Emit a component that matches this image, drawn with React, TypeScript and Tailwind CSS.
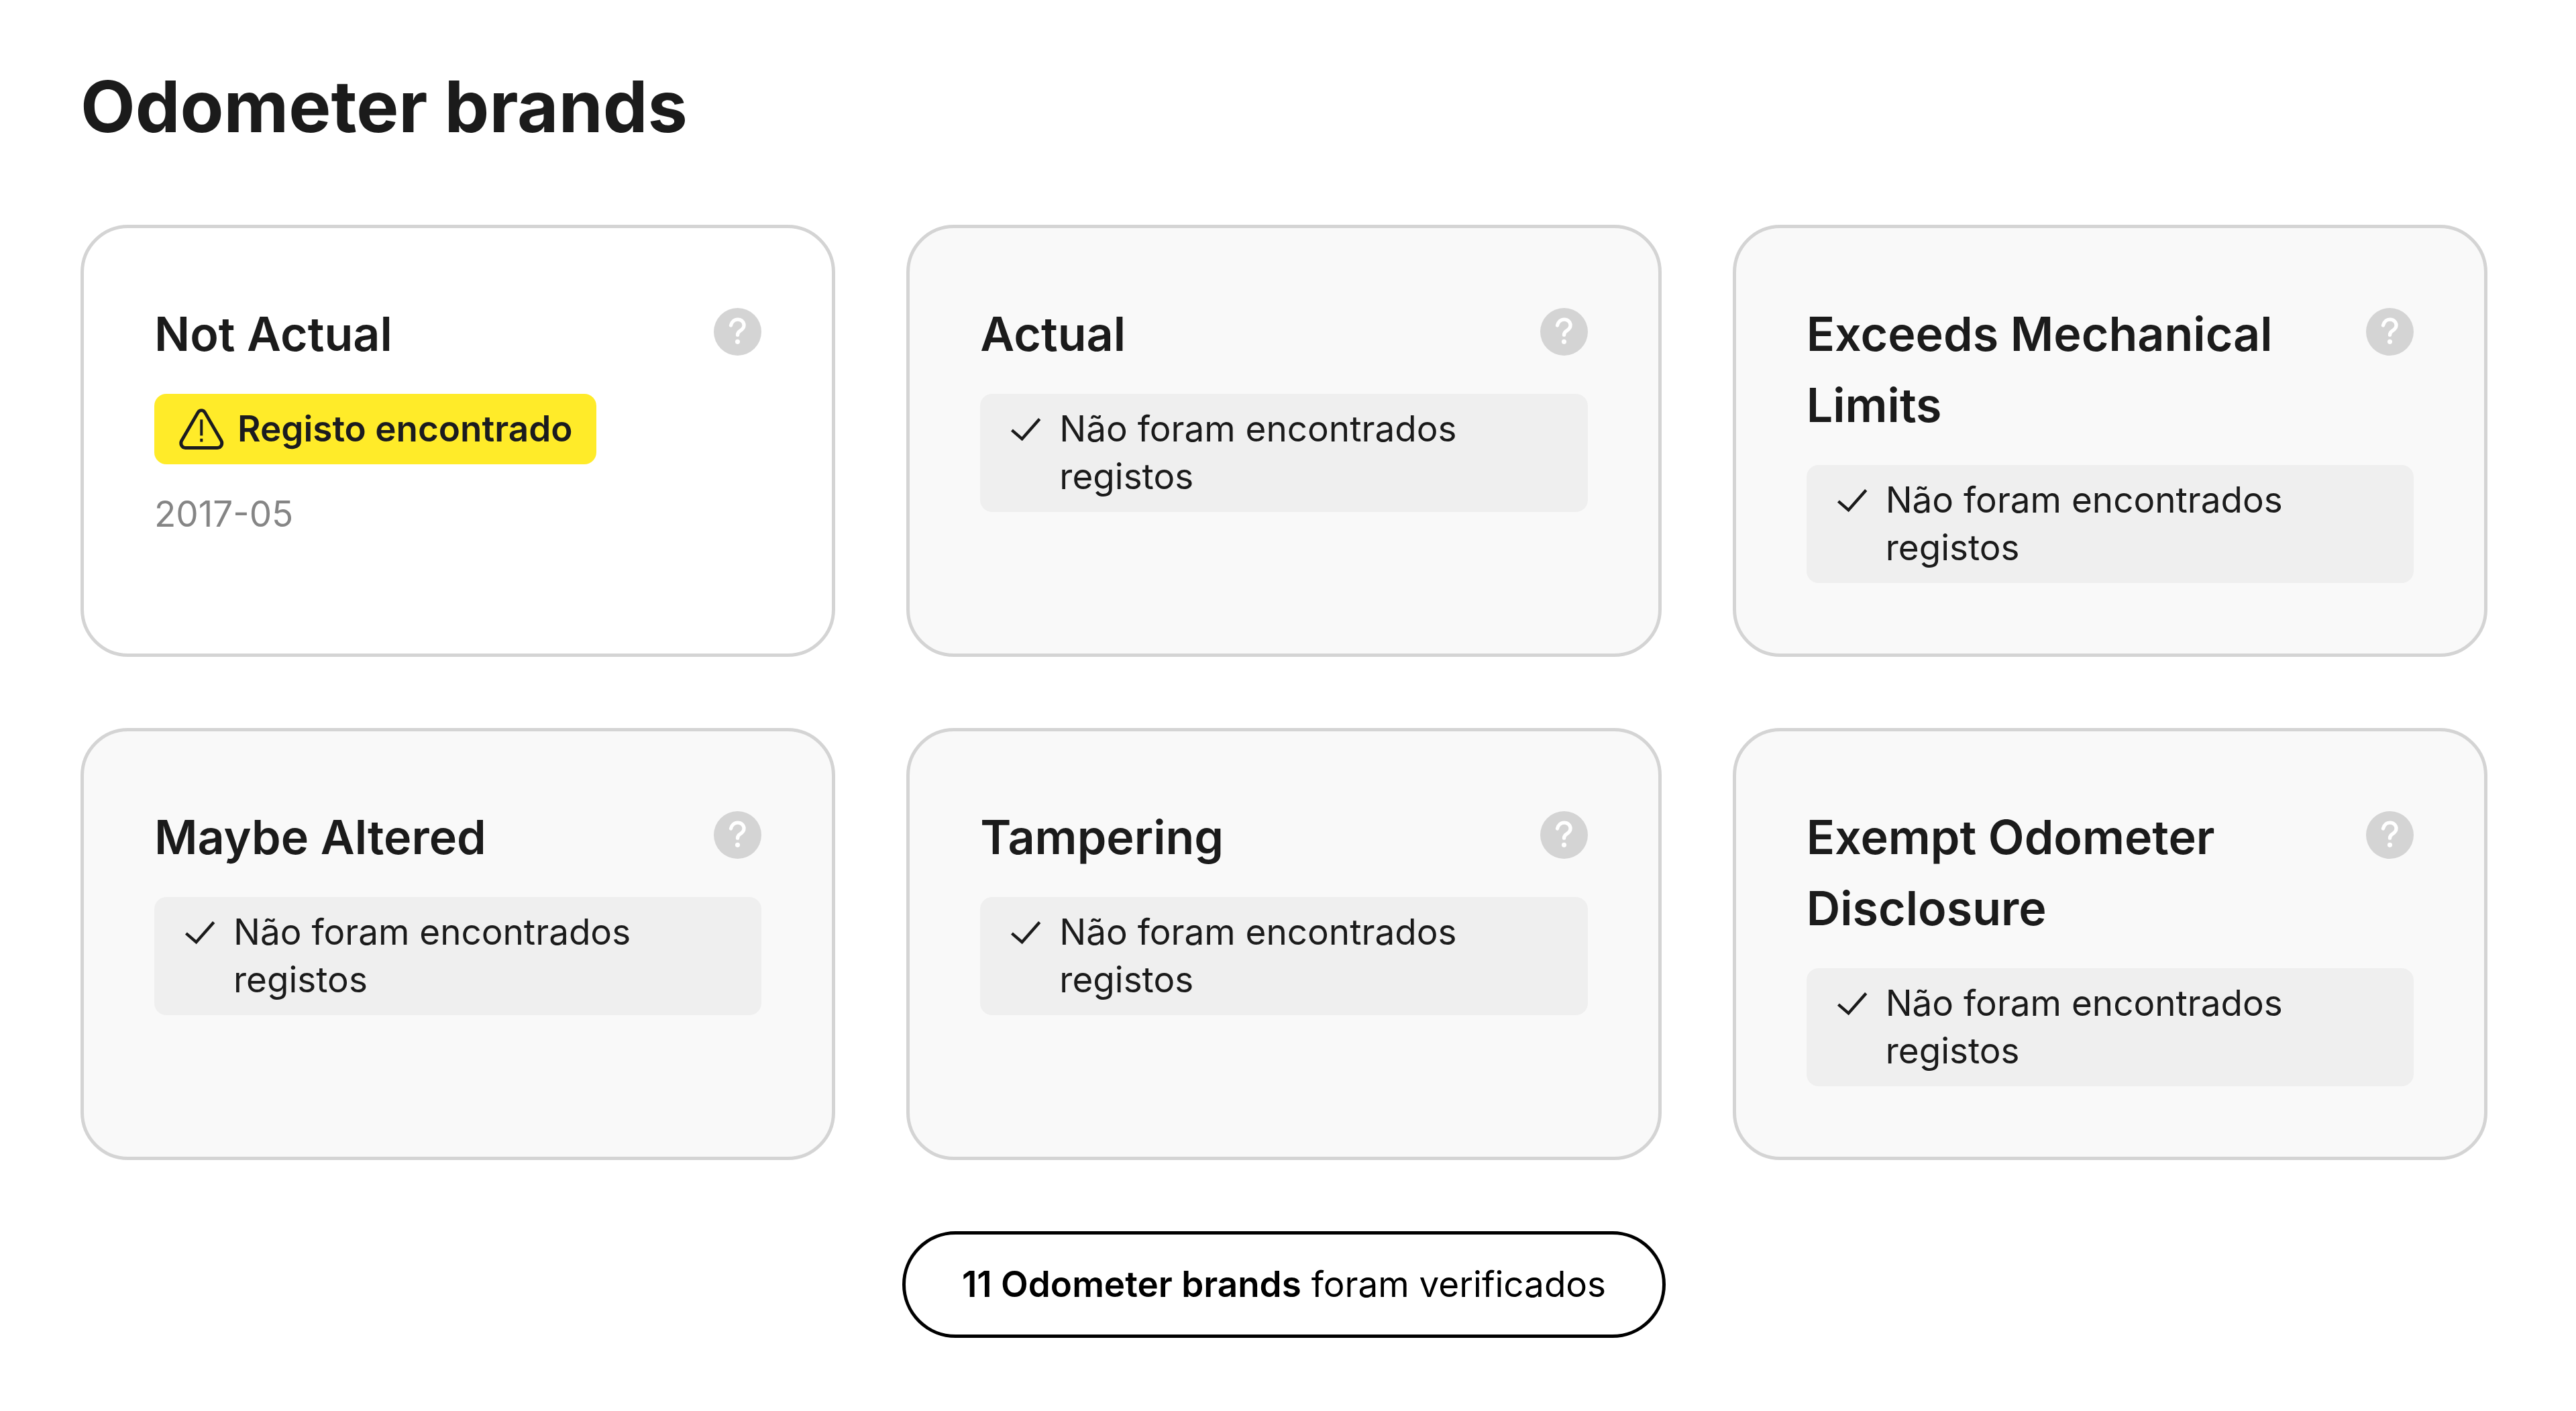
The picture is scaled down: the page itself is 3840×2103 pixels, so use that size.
import React from 'react';

interface Brand {
    id: number;
    title: string;
    date?: string;
}

const brands: Brand[] = [
    { id: 1, title: 'Not Actual', date: '2017-05' },
    { id: 2, title: 'Actual' },
    { id: 3, title: 'Exceeds Mechanical Limits' },
    { id: 4, title: 'Maybe Altered' },
    { id: 5, title: 'Tampering' },
    { id: 6, title: 'Exempt Odometer Disclosure' },
];

function HelpIcon() {
    return (
        <svg viewBox="0 0 16 16" className="size-[71px]" fill="none" aria-hidden="true">
            <circle cx="8" cy="8" r="8" fill="#d4d4d4" />
            <path
                d="M5.75 5.85C6.05 4.65 6.9 3.85 8.05 3.85c1.2 0 2.1.85 2.1 1.95 0 .95-.6 1.4-1.2 1.8-.6.35-.95.7-.95 1.45"
                stroke="#fff"
                strokeWidth="1.2"
                strokeLinecap="round"
            />
            <circle cx="8" cy="11.35" r="0.8" fill="#fff" />
        </svg>
    );
}

function WarningIcon() {
    return (
        <svg viewBox="0 0 16 16" className="size-[71px] shrink-0" fill="none" stroke="#1b1b1f" aria-hidden="true">
            <path
                d="M6.8 2.4 1.3 11.9c-.6 1.05.05 2.4 1.3 2.4h10.7c1.25 0 1.9-1.35 1.3-2.4L9.1 2.4c-.55-.9-1.75-.9-2.3 0Z"
                strokeWidth="1.1"
            />
            <path d="M7.95 4.8v5.4M7.95 11.2v1.1" strokeWidth="0.9" />
        </svg>
    );
}

function CheckIcon() {
    return (
        <svg viewBox="0 0 16 16" className="size-[71px] shrink-0" fill="none" stroke="#1b1b1b" aria-hidden="true">
            <path d="m2.8 8.35 3.4 2.95L12.1 4.6" />
        </svg>
    );
}

function BrandCard({ brand }: { brand: Brand }) {
    const found = Boolean(brand.date);

    return (
        <article
            className={`flex flex-col items-start gap-9 rounded-[71px] border-[5px] border-[#d4d4d4] p-[105px] ${
                found ? 'bg-white' : 'bg-[#f9f9f9]'
            }`}
        >
            <div className="flex w-full items-start justify-between">
                <h3 className="text-[70px] leading-[106px] font-semibold">{brand.title}</h3>
                <button type="button" aria-label={`Ajuda: ${brand.title}`} className="mt-3.5 shrink-0 cursor-pointer">
                    <HelpIcon />
                </button>
            </div>

            {found ? (
                <>
                    <div className="flex items-center gap-[18px] rounded-[18px] bg-[#ffeb29] px-[35px] py-[17px] text-[#1b1b1f]">
                        <WarningIcon />
                        <span className="text-[53px] leading-[71px] font-semibold">Registo encontrado</span>
                    </div>
                    <p className="text-[53px] leading-[76px] text-[#858585]">{brand.date}</p>
                </>
            ) : (
                <div className="flex w-full items-start gap-3 rounded-[18px] bg-[#efefef] px-[35px] py-[17px]">
                    <CheckIcon />
                    <span className="text-[53px] leading-[71px]">Não foram encontrados registos</span>
                </div>
            )}
        </article>
    );
}

export default function App() {
    return (
        <main className="min-h-screen bg-white pt-[88px] pr-[132px] pb-[106px] pl-[120px] font-['Inter',sans-serif] text-[#1b1b1b]">
            <h2 className="text-[106px] leading-[141px] font-bold">Odometer brands</h2>

            {/* Cards */}
            <section className="mt-[106px] grid grid-cols-3 gap-[106px]">
                {brands.map((brand) => (
                    <BrandCard key={brand.id} brand={brand} />
                ))}
            </section>

            {/* Summary */}
            <div className="mt-[106px] flex justify-center">
                <p className="rounded-full border-[5px] border-black px-[84px] py-[39px] text-[53px] leading-[71px] text-black">
                    <strong className="font-semibold">11 Odometer brands</strong> foram verificados
                </p>
            </div>
        </main>
    );
}
